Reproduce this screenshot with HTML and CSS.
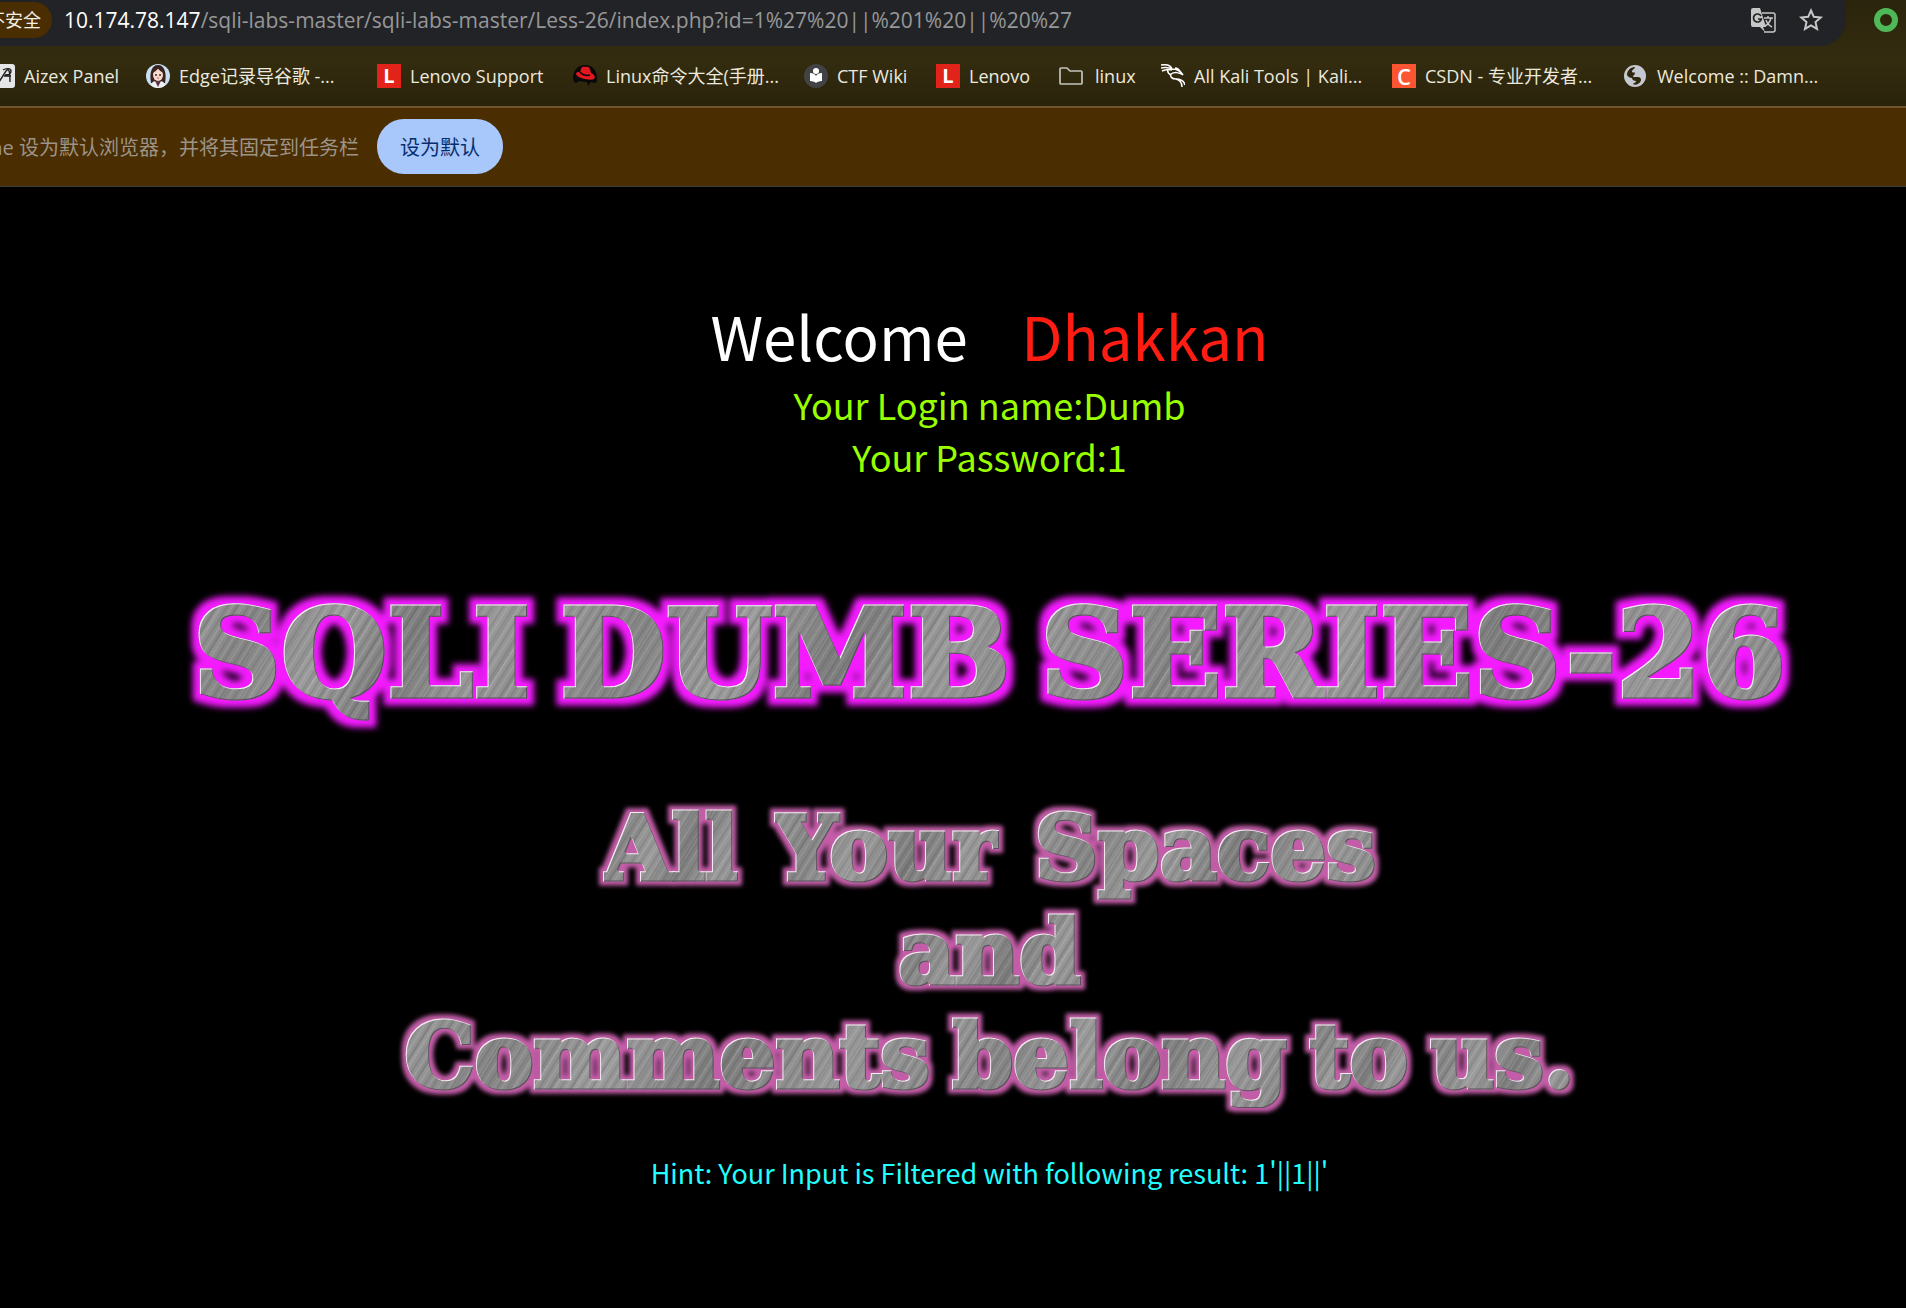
FILE: index.html
```html
<!DOCTYPE html>
<html lang="zh-CN">
<head>
<meta charset="utf-8">
<title>Less-26</title>
<link rel="stylesheet" href="styles.css">
</head>
<body>
<svg class="defs" width="0" height="0" aria-hidden="true">
  <filter id="glow-magenta" x="-5%" y="-20%" width="110%" height="140%" color-interpolation-filters="sRGB">
    <feMorphology in="SourceAlpha" operator="dilate" radius="7" result="fat"/>
    <feGaussianBlur in="fat" stdDeviation="3" result="soft"/>
    <feFlood flood-color="#f41bff"/>
    <feComposite in2="soft" operator="in" result="glow"/>
    <feOffset in="SourceAlpha" dx="1" dy="1" result="down"/>
    <feFlood flood-color="#f8eefa"/>
    <feComposite in2="SourceAlpha" operator="in"/>
    <feComposite in2="down" operator="out" result="light"/>
    <feOffset in="SourceAlpha" dx="-1" dy="-1" result="up"/>
    <feFlood flood-color="#5c4a60"/>
    <feComposite in2="SourceAlpha" operator="in"/>
    <feComposite in2="up" operator="out" result="dark"/>
    <feMerge><feMergeNode in="glow"/><feMergeNode in="SourceGraphic"/><feMergeNode in="dark"/><feMergeNode in="light"/></feMerge>
  </filter>
  <filter id="glow-pink" x="-5%" y="-10%" width="110%" height="120%" color-interpolation-filters="sRGB">
    <feMorphology in="SourceAlpha" operator="dilate" radius="4" result="fat"/>
    <feGaussianBlur in="fat" stdDeviation="2" result="soft"/>
    <feFlood flood-color="#c45da8"/>
    <feComposite in2="soft" operator="in" result="glow"/>
    <feOffset in="SourceAlpha" dx="1" dy="1" result="down"/>
    <feFlood flood-color="#faeaf6"/>
    <feComposite in2="SourceAlpha" operator="in"/>
    <feComposite in2="down" operator="out" result="light"/>
    <feOffset in="SourceAlpha" dx="-1" dy="-1" result="up"/>
    <feFlood flood-color="#5f4f5c"/>
    <feComposite in2="SourceAlpha" operator="in"/>
    <feComposite in2="up" operator="out" result="dark"/>
    <feMerge><feMergeNode in="glow"/><feMergeNode in="SourceGraphic"/><feMergeNode in="dark"/><feMergeNode in="light"/></feMerge>
  </filter>
</svg>

<header class="browser">
  <div class="toolbar">
    <div class="omnibox">
      <button class="chip" type="button">不安全</button>
      <div class="url"><span class="host">10.174.78.147</span>/sqli-labs-master/sqli-labs-master/Less-26/index.php?id=1%27%20||%201%20||%20%27</div>
      <button class="tool" type="button" aria-label="翻译">
        <svg width="26" height="26" viewBox="0 0 26 26"><path d="M12 6h11a2 2 0 0 1 2 2v15a2 2 0 0 1-2 2h-9" fill="none" stroke="#c7c7c7" stroke-width="1.500"/><path d="M3 1h7l6 19-3 0 2 5-5-5H3a2 2 0 0 1-2-2V3a2 2 0 0 1 2-2z" fill="#c7c7c7"/><path d="M11 9a4 4 0 1 0 .4 3H8" fill="none" stroke="#222326" stroke-width="1.700"/><path d="M14 11h9M18 9v2M21 11c-1 4-4 7-6 8M16 13c1 3 4 6 6 7" fill="none" stroke="#c7c7c7" stroke-width="1.500"/></svg>
      </button>
      <button class="tool" type="button" aria-label="收藏">
        <svg width="26" height="26" viewBox="0 0 26 26"><path d="M13 3.500l2.800 6.300 6.900.7-5.200 4.600 1.500 6.800-6-3.600-6 3.600 1.500-6.800-5.200-4.600 6.900-.7z" fill="none" stroke="#c7c7c7" stroke-width="2"/></svg>
      </button>
    </div>
    <button class="ext" type="button" aria-label="扩展程序"></button>
  </div>

  <nav class="bookmarks">
    <a href="#"><svg width="24" height="24" viewBox="0 0 24 24"><rect width="24" height="24" rx="3" fill="#e6e6e6"/><path d="M8 18l7-11c3-3 4 0 4 11M12 6c3-2 8-2 8 1s-3 4-6 4M13 12l7 0" fill="none" stroke="#222" stroke-width="1.400"/></svg><span>Aizex Panel</span></a>
    <a href="#"><svg width="24" height="24" viewBox="0 0 24 24"><circle cx="12" cy="12" r="12" fill="#c9e0f2"/><path d="M5 19C3 8 6 1 12 1s9 7 7 18z" fill="#3b2420"/><ellipse cx="12" cy="11" rx="5" ry="6" fill="#f8d9cb"/><path d="M6 9c3-1 5-3 6-5 1 2 3 4 6 5-1-5-3-6-6-6S7 4 6 9z" fill="#3b2420"/><path d="M5 21c1-4 4-4 7-4s6 0 7 4c-4 4-10 4-14 0z" fill="#f3eef2"/><path d="M9 17l3 6 3-6z" fill="#5b3944"/><circle cx="10" cy="11" r="1" fill="#332"/><circle cx="14" cy="11" r="1" fill="#332"/><path d="M11 14h2" stroke="#d0555a"/></svg><span>Edge记录导谷歌 -...</span></a>
    <a href="#"><i class="tile lenovo">L</i><span>Lenovo Support</span></a>
    <a href="#"><svg width="24" height="24" viewBox="0 0 24 24"><path d="M0 15C0 6 5 1 12 1s12 5 12 14c0 3-1 4-3 4l-3-1-3 4-1-4-8-1-3 2-2-1z" fill="#090909"/><path d="M8 5c1-3 3-2 5-2 3-1 4 1 5 6 3 1 5 4 3 6-4 2-17-1-18-5 0-2 2-2 4-2z" fill="#e5161d"/><path d="M7 8c2 3 7 4 10 3" fill="none" stroke="#090909" stroke-width="1.500"/></svg><span>Linux命令大全(手册...</span></a>
    <a href="#"><svg width="24" height="24" viewBox="0 0 24 24"><circle cx="12" cy="12" r="12" fill="#414345"/><circle cx="12" cy="7" r="3" fill="#fff"/><path d="M6 9c3 0 5 1 6 3 1-2 3-3 6-3v8c-3 0-5 1-6 2-1-1-3-2-6-2z" fill="#fff"/></svg><span>CTF Wiki</span></a>
    <a href="#"><i class="tile lenovo">L</i><span>Lenovo</span></a>
    <a href="#"><svg width="24" height="24" viewBox="0 0 24 24"><path d="M1 5a1 1 0 0 1 1-1h6l3 3h11a1 1 0 0 1 1 1v11a1 1 0 0 1-1 1H2a1 1 0 0 1-1-1z" fill="none" stroke="#c3c3ba" stroke-width="1.700"/></svg><span class="folder">linux</span></a>
    <a href="#"><svg width="24" height="24" viewBox="0 0 24 24"><path d="M0 1c6-1 10 1 11 4M0 4c5-1 9 0 11 1M1 7c4-2 7-2 10-1M11 5c4 0 8 1 11 6-4-3-9-3-12-1-1 3 1 5 5 5 5 0 8 2 9 6M15 15c4 1 6 4 6 8M7 5c-1 3 1 5 3 6M14 4c3 0 5 3 6 5" fill="none" stroke="#fff" stroke-width="1.500"/></svg><span>All Kali Tools | Kali...</span></a>
    <a href="#"><i class="tile csdn">C</i><span>CSDN - 专业开发者...</span></a>
    <a href="#"><svg width="24" height="24" viewBox="0 0 24 24"><circle cx="11" cy="12" r="11" fill="#c5c8d0"/><path d="M3 11C3 7 6 3 11 3c0 2-3 2-3 5 1 1 3 0 3 1 0 2-2 2-2 4h5c2 0 3 1 3 3s-2 3-3 4c-2 1-4 1-5 0 0-1 3-1 3-3-2 0-4-1-4-3-2 0-4-1-5-3z" fill="#2e290e"/></svg><span>Welcome :: Damn...</span></a>
  </nav>

  <div class="infobar">
    <p>me 设为默认浏览器，并将其固定到任务栏</p>
    <button class="default" type="button">设为默认</button>
  </div>
</header>

<main class="page">
  <h1 class="welcome">Welcome <span>Dhakkan</span></h1>
  <p class="login">Your Login name:Dumb<br>Your Password:1</p>
  <h2 class="metal series"><span>SQLI</span> <span>DUMB</span> <span>SERIES-26</span></h2>
  <h3 class="slogan">
    <span class="metal lead"><span>All</span> <span>Your</span> <span>Spaces</span></span>
    <span class="metal"><span>and</span></span>
    <span class="metal"><span>Comments</span> <span>belong</span> <span>to</span> <span>us.</span></span>
  </h3>
  <p class="hint">Hint: Your Input is Filtered with following result: 1'||1||'</p>
</main>
</body>
</html>
```
FILE: styles.css
```css
* { box-sizing: border-box; }

body {
  margin: 0;
  min-height: 100vh;
  background: #000;
  overflow-x: hidden;
  font-family: "Open Sans", "Noto Sans CJK SC", sans-serif;
}

h1, h2, h3, p { margin: 0; font-weight: 400; }
button { border: 0; padding: 0; font-family: inherit; cursor: pointer; }
svg { display: block; flex: none; }
.defs { position: absolute; }

/* Browser chrome */
.browser { overflow: hidden; background: linear-gradient(#2a240c, #342c0f 60px, #29230b 106px); }

.toolbar { display: flex; align-items: center; height: 46px; padding-right: 8px; }

.omnibox {
  flex: 1;
  display: flex;
  align-items: center;
  height: 46px;
  padding: 0 22px 6px 0;
  margin-right: 28px;
  background: #222326;
  border-radius: 0 0 26px 0;
}

.chip {
  flex: none;
  width: 80px;
  height: 36px;
  margin-left: -28px;
  padding-right: 11px;
  border-radius: 18px;
  background: #4a2d01;
  color: #f3f0e8;
  font-size: 18px;
  line-height: 36px;
  text-align: right;
  white-space: nowrap;
}

.url { flex: 1; margin-left: 12px; font-size: 21px; line-height: 40px; color: #969799; white-space: nowrap; }
.host { color: #fff; }

.tool { width: 26px; height: 26px; margin-left: 22px; background: none; }
.ext { width: 24px; height: 24px; margin-bottom: 6px; border: 6px solid #50b957; border-radius: 50%; background: none; }

.bookmarks {
  display: grid;
  grid-template-columns: 155px 231px 196px 231px 132px 123px 102px 231px 232px 1fr;
  height: 60px;
  margin-left: -9px;
}
.bookmarks a {
  display: flex;
  align-items: center;
  gap: 9px;
  color: #ebe9df;
  font-size: 18px;
  line-height: 60px;
  white-space: nowrap;
  text-decoration: none;
}
.folder { padding-left: 3px; }

.tile { flex: none; width: 24px; height: 24px; color: #fff; font-style: normal; font-weight: 700; text-align: center; line-height: 24px; }
.lenovo { background: #e2231a; font-size: 20px; }
.csdn { background: #fc5531; font-size: 22px; font-weight: 600; }

.infobar {
  display: flex;
  align-items: center;
  gap: 18px;
  height: 81px;
  margin-left: -16px;
  padding-bottom: 2px;
  border-top: 2px solid #71552c;
  border-bottom: 1px solid #40413e;
  background: #4a2d01;
}
.infobar p { font-size: 20px; color: #9c9488; white-space: nowrap; }
.default {
  width: 126px;
  height: 55px;
  border-radius: 27px;
  background: #a8c7fa;
  color: #062e6f;
  font-size: 20px;
}

/* Page content */
.page {
  padding: 107px 0 40px 73px;
  text-align: center;
  font-family: "Noto Sans CJK SC", sans-serif;
}

.welcome { font-size: 60px; line-height: 82px; color: #fff; }
.welcome span { margin-left: 40px; color: #ff1c12; }
.login { margin-top: 2px; font-size: 36px; line-height: 52px; color: #99ff00; }
.hint { margin-top: 39px; font-size: 27px; line-height: 52px; color: #22ffff; }

/* Brushed metal lettering with a glow */
.metal {
  display: flex;
  justify-content: center;
  font-family: "DejaVu Serif", serif;
  font-weight: 700;
  white-space: nowrap;
}
.metal span {
  color: transparent;
  -webkit-text-stroke: 5px transparent;
  background:
    repeating-linear-gradient(122deg, #ffffff1c 0 1px, #0000 2px 4px, #00000014 5px 6px, #0000 7px 9px),
    repeating-linear-gradient(122deg, #ffffff10 0 1px, #0000 4px 13px, #0000000c 15px 17px),
    linear-gradient(115deg, #999 0, #858585 20%, #9c9c9c 40%, #7c7c7c 60%, #999 80%, #8a8a8a 100%);
  -webkit-background-clip: text;
  background-clip: text;
}
.series { gap: 30px; margin-top: 101px; font-size: 122px; line-height: 140px; filter: url(#glow-magenta); }
.slogan { margin-top: 73px; font-size: 88px; line-height: 104px; filter: url(#glow-pink); }
.slogan .metal { gap: 22px; }
.slogan .lead { gap: 36px; }
```
